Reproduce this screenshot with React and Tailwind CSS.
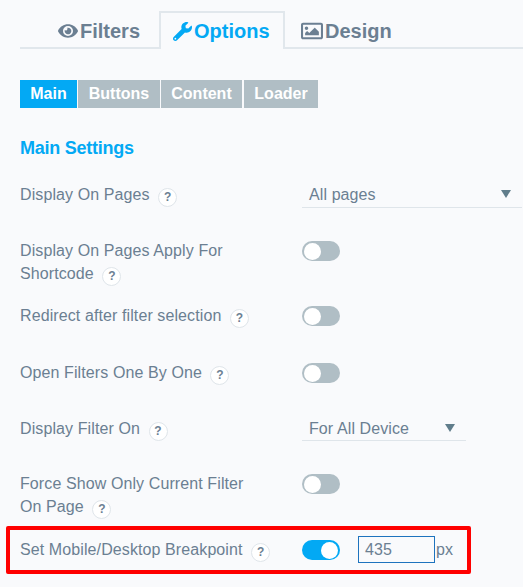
import { FaEye, FaWrench, FaRegImage } from "react-icons/fa";

const Help = () => (
  <span className="inline-flex items-center justify-center w-[19px] h-[19px] ml-[4px] rounded-full bg-white border border-[#dfe5ea] text-[12px] leading-none font-bold text-[#6c8093] align-[-1px]">
    ?
  </span>
);

const Toggle = ({ on }) => (
  <div
    className={`w-[38px] h-[20px] mt-[2px] rounded-full flex items-center px-[2px] ${
      on ? "bg-[#03a9f4] justify-end" : "bg-[#b0bec5] justify-start"
    }`}
  >
    <div className="w-[17px] h-[17px] rounded-full bg-white" />
  </div>
);

const Select = ({ label, width, height }) => (
  <div className={`${width} ${height} flex items-start justify-between border-b border-[#dfe5ea] pl-[7px] pr-[11px]`}>
    <span>{label}</span>
    <span className="w-0 h-0 mt-[7px] border-x-[5px] border-x-transparent border-t-[8px] border-t-[#607d8b]" />
  </div>
);

const Row = ({ height, children, control }) => (
  <div className={`flex items-start ${height}`}>
    <div className="w-[282px] shrink-0 pr-[6px]">{children}</div>
    {control}
  </div>
);

const App = () => {
  return (
    <div className="relative w-[523px] h-[587px] overflow-hidden bg-[#f9fafc] text-[16px] leading-[23px] tracking-[0.1px] text-[#6b7f92] font-['Liberation_Sans',Arial,sans-serif]">
      <div className="ml-[20px] pt-[11px] h-[49px] flex items-end border-b-2 border-[#e1e7ec] text-[20px] tracking-normal font-bold text-[#6b7f92]">
        <div className="w-[139px] h-[38px] pt-[6px] flex items-center gap-[2px] pl-[38px]">
          <FaEye className="text-[20px]" />
          <span>Filters</span>
        </div>
        <div className="w-[126px] h-[38px] -mb-[2px] flex items-center gap-[2px] pl-[12px] border-2 border-b-0 border-[#e1e7ec] bg-[#f9fafc] text-[#03a9f4]">
          <FaWrench className="text-[19px]" />
          <span>Options</span>
        </div>
        <div className="h-[38px] pt-[6px] flex items-center gap-[2px] pl-[16px]">
          <FaRegImage className="text-[22px]" />
          <span>Design</span>
        </div>
      </div>

      <div className="ml-[20px] mt-[31px] flex gap-[1px] h-[28px] tracking-normal font-bold text-white">
        <div className="w-[57px] pb-[2px] flex items-center justify-center bg-[#03a9f4]">Main</div>
        <div className="w-[82px] pb-[2px] flex items-center justify-center bg-[#b0bec5]">Buttons</div>
        <div className="w-[81px] pb-[2px] flex items-center justify-center bg-[#b0bec5]">Content</div>
        <div className="w-[74px] ml-[1px] pb-[2px] flex items-center justify-center bg-[#b0bec5]">Loader</div>
      </div>

      <h2 className="ml-[20px] mt-[28px] text-[18px] leading-[24px] tracking-[-0.25px] font-bold text-[#03a9f4]">Main Settings</h2>

      <div className="ml-[20px] mt-[23px]">
        <Row height="h-[56px]" control={<Select label="All pages" width="w-[220px]" height="h-[25px]" />}>
          Display On Pages <Help />
        </Row>
        <Row height="h-[65px]" control={<Toggle />}>
          Display On Pages Apply For
          <br />
          Shortcode <Help />
        </Row>
        <Row height="h-[57px]" control={<Toggle />}>
          Redirect after filter selection <Help />
        </Row>
        <Row height="h-[56px]" control={<Toggle />}>
          Open Filters One By One <Help />
        </Row>
        <Row height="h-[55px]" control={<Select label="For All Device" width="w-[164px]" height="h-[24px]" />}>
          Display Filter On <Help />
        </Row>
        <Row height="h-[66px]" control={<Toggle />}>
          Force Show Only Current Filter
          <br />
          On Page <Help />
        </Row>
        <Row
          height="h-[40px]"
          control={
            <div className="flex items-start">
              <Toggle on />
              <div className="w-[77px] h-[27px] ml-[18px] -mt-[2px] pl-[6px] flex items-center border border-[#1e73be]">435</div>
              <span className="ml-[1px]">px</span>
            </div>
          }
        >
          Set Mobile/Desktop Breakpoint <Help />
        </Row>
      </div>

      <div className="absolute left-[6px] top-[526px] w-[465px] h-[48px] border-4 border-[#ff0000] rounded-[2px]" />
    </div>
  );
};

export default App;
